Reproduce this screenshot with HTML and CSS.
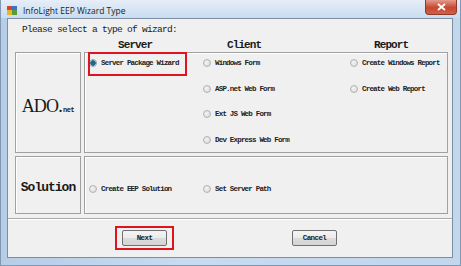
FILE: index.html
```html
<!DOCTYPE html>
<html lang="en">
<head>
  <meta charset="UTF-8" />
  <title>InfoLight EEP Wizard Type</title>
  <link rel="stylesheet" href="styles.css">
</head>
<body>
  <div class="window">
    <div class="titlebar">
      <svg class="app-icon" width="10" height="9" viewBox="0 0 10 9">
        <rect x="0" y="0" width="5" height="4" fill="#d9412f" />
        <rect x="5" y="0" width="5" height="4" fill="#3a73c4" />
        <rect x="0" y="4" width="5" height="5" fill="#e9b52c" />
        <rect x="5" y="4" width="5" height="5" fill="#5a9a3c" />
      </svg>
      <span class="title">InfoLight EEP Wizard Type</span>
      <div class="close-btn">
        <svg width="9" height="8" viewBox="0 0 9 8">
          <path d="M1 1 L8 7 M8 1 L1 7" stroke="#fff" stroke-width="1.8" />
        </svg>
      </div>
    </div>

    <div class="client">
      <div class="panel">
        <p class="prompt">Please select a type of wizard:</p>
        <div class="headers">
          <span class="head head-server">Server</span>
          <span class="head head-client">Client</span>
          <span class="head head-report">Report</span>
        </div>

        <div class="row row-ado">
          <div class="label-box ado-box">
            <span class="ado">ADO.</span><span class="net">net</span>
          </div>
          <div class="options">
            <div class="col">
              <label class="option marked"><span class="radio checked"></span>Server Package Wizard</label>
            </div>
            <div class="col">
              <label class="option"><span class="radio"></span>Windows Form</label>
              <label class="option"><span class="radio"></span>ASP.net Web Form</label>
              <label class="option"><span class="radio"></span>Ext JS Web Form</label>
              <label class="option"><span class="radio"></span>Dev Express Web Form</label>
            </div>
            <div class="col">
              <label class="option"><span class="radio"></span>Create Windows Report</label>
              <label class="option"><span class="radio"></span>Create Web Report</label>
            </div>
          </div>
        </div>

        <div class="row row-solution">
          <div class="label-box">
            <span class="solution">Solution</span>
          </div>
          <div class="options">
            <div class="col">
              <label class="option"><span class="radio"></span>Create EEP Solution</label>
            </div>
            <div class="col">
              <label class="option"><span class="radio"></span>Set Server Path</label>
            </div>
          </div>
        </div>
      </div>

      <div class="footer">
        <span class="marked-btn"><button class="btn">Next</button></span>
        <button class="btn btn-cancel">Cancel</button>
      </div>
    </div>
  </div>
</body>
</html>
```

FILE: styles.css
```css
* {
  margin: 0;
  padding: 0;
  box-sizing: border-box;
}

body {
  background: #bfd3ea;
  font-family: 'Liberation Mono', monospace;
  color: #1a1a1a;
}

.window {
  width: 461px;
  height: 266px;
  display: flex;
  flex-direction: column;
  background: linear-gradient(90deg, #b7cde6 0%, #c8dbef 40%, #c2d6ec 100%);
  border: 1px solid #7f98b4;
  border-top: none;
}

.titlebar {
  height: 18px;
  display: flex;
  align-items: center;
  padding-left: 6px;
  background: linear-gradient(#e6eef8, #c9dcf0);
}

.app-icon {
  margin-top: 2px;
}

.title {
  font-family: 'Open Sans', 'Liberation Sans', sans-serif;
  font-size: 8.5px;
  color: #1b1b1b;
  margin-left: 6px;
  margin-top: 2px;
}

.close-btn {
  margin-left: auto;
  margin-right: 3px;
  align-self: flex-start;
  width: 32px;
  height: 15px;
  display: flex;
  align-items: center;
  justify-content: center;
  background: linear-gradient(#e59a8c, #c8462f 55%, #d2604a);
  border: 1px solid #8d3a2c;
  border-top: none;
  border-radius: 0 0 4px 4px;
}

.client {
  flex: 1;
  margin: 0 7px 7px 6px;
  background: #f0f0f0;
  border: 1px solid #7d8ea3;
  display: flex;
  flex-direction: column;
}

.panel {
  height: 200px;
  padding: 0 4px 0 7px;
  border-bottom: 1px solid #a9a9a9;
  box-shadow: 0 1px 0 #ffffff;
}

.prompt {
  padding: 5px 0 0 7px;
  font-size: 9.5px;
  line-height: 12px;
  letter-spacing: -0.7px;
}

.headers {
  height: 14px;
  margin-top: 2px;
  padding-left: 74px;
  display: grid;
  grid-template-columns: 114px 147px auto;
  font-size: 11px;
  line-height: 14px;
  font-weight: bold;
  letter-spacing: -0.9px;
}

.head-server {
  padding-left: 29px;
}

.head-client,
.head-report {
  padding-left: 24px;
}

.row {
  display: grid;
  grid-template-columns: 66px 1fr;
  gap: 3px;
}

.row-ado {
  height: 101px;
}

.row-solution {
  height: 58px;
  margin-top: 3px;
}

.label-box,
.options {
  border: 1px solid #a0a0a0;
  box-shadow: inset 1px 1px 0 #ffffff;
}

.label-box {
  display: flex;
  align-items: center;
  justify-content: center;
}

.ado-box {
  padding-top: 8px;
  align-items: baseline;
  align-content: center;
  flex-wrap: wrap;
}

.ado {
  font-family: 'Liberation Serif', serif;
  font-size: 18px;
  letter-spacing: -0.8px;
}

.net {
  font-size: 7px;
  font-weight: bold;
  letter-spacing: -0.4px;
  margin-left: 1px;
}

.solution {
  font-size: 13px;
  font-weight: bold;
  letter-spacing: -1px;
  margin-top: 5px;
}

.options {
  display: grid;
  grid-template-columns: 114px 147px auto;
  padding: 4px 0 0 4px;
}

.row-solution .options {
  padding-top: 26px;
}

.col {
  display: flex;
  flex-direction: column;
  gap: 13.5px;
}

.option {
  position: relative;
  height: 12px;
  display: flex;
  align-items: center;
  gap: 4px;
  font-size: 7.5px;
  font-weight: bold;
  letter-spacing: -0.8px;
  color: #222;
  white-space: nowrap;
}

.radio {
  width: 8px;
  height: 8px;
  flex: none;
  border-radius: 50%;
  border: 1px solid #b4b4b4;
  background: radial-gradient(circle at 40% 40%, #f4f4f4, #d4d4d4);
}

.radio.checked {
  border-color: #8aa0b0;
  background: radial-gradient(circle, #1f6a86 0 2.5px, #e8eef2 3px);
}

.marked::after {
  content: "";
  position: absolute;
  top: -5px;
  left: -1px;
  width: 95px;
  bottom: -7px;
  border: 2px solid #e0141e;
}

.footer {
  flex: 1;
  display: flex;
  align-items: flex-start;
  padding: 11px 0 0 114px;
}

.marked-btn {
  position: relative;
  display: flex;
}

.marked-btn::after {
  content: "";
  position: absolute;
  top: -4px;
  left: -7px;
  right: -7px;
  bottom: -4px;
  border: 2px solid #e0141e;
}

.btn {
  width: 45px;
  height: 16px;
  font-family: 'Liberation Mono', monospace;
  font-size: 7.5px;
  font-weight: bold;
  letter-spacing: -0.6px;
  color: #222;
  background: linear-gradient(#f4f4f4 0%, #ebebeb 50%, #dcdcdc 51%, #d4d4d4 100%);
  border: 1px solid #707070;
  border-radius: 2px;
}

.btn-cancel {
  margin-left: 125px;
}
```
